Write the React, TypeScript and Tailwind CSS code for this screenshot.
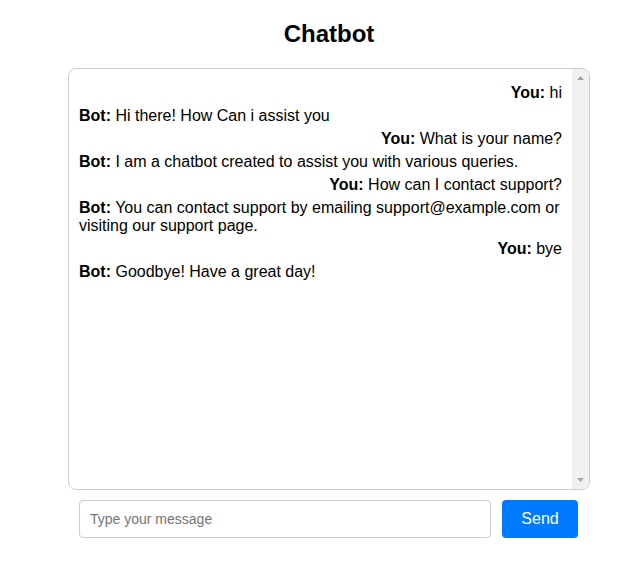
const messages = [
  { from: "You", text: "hi" },
  { from: "Bot", text: "Hi there! How Can i assist you" },
  { from: "You", text: "What is your name?" },
  { from: "Bot", text: "I am a chatbot created to assist you with various queries." },
  { from: "You", text: "How can I contact support?" },
  {
    from: "Bot",
    text: "You can contact support by emailing support@example.com or visiting our support page.",
  },
  { from: "You", text: "bye" },
  { from: "Bot", text: "Goodbye! Have a great day!" },
];

export default function App() {
  return (
    <div className="min-h-screen bg-white font-['Liberation_Sans',Arial,sans-serif] text-black">
      <div className="flex flex-col w-[522px] ml-[68px]">
        <h1 className="mt-5 mb-5 text-center text-2xl font-bold leading-[27.6px]">Chatbot</h1>

        <div className="flex h-[422px] rounded-lg border border-[#ccc] overflow-hidden">
          <div className="flex-1 p-[10px]">
            {messages.map((m, i) => (
              <div
                key={i}
                className={
                  m.from === "You"
                    ? "my-[5px] text-right text-base leading-[18px]"
                    : "my-[5px] text-left text-base leading-[18px]"
                }
              >
                <strong>{m.from}:</strong> {m.text}
              </div>
            ))}
          </div>
          <div className="flex w-[17px] flex-col justify-between bg-[#f1f1f1] py-[6px]">
            <svg width="17" height="5" viewBox="0 0 17 5">
              <path d="M5 5 L8.5 1 L12 5 Z" fill="#a3a3a3" />
            </svg>
            <svg width="17" height="5" viewBox="0 0 17 5">
              <path d="M5 0 L8.5 4 L12 0 Z" fill="#a3a3a3" />
            </svg>
          </div>
        </div>

        <div className="mt-[10px] ml-[11px] flex w-[499px] gap-[11px]">
          <input
            type="text"
            placeholder="Type your message"
            className="min-w-0 flex-1 rounded border border-[#ccc] px-[10px] py-[10px] text-sm leading-4 outline-none placeholder:text-[#757575]"
          />
          <button className="w-[76px] rounded bg-[#007bff] text-base text-white">Send</button>
        </div>
      </div>
    </div>
  );
}
